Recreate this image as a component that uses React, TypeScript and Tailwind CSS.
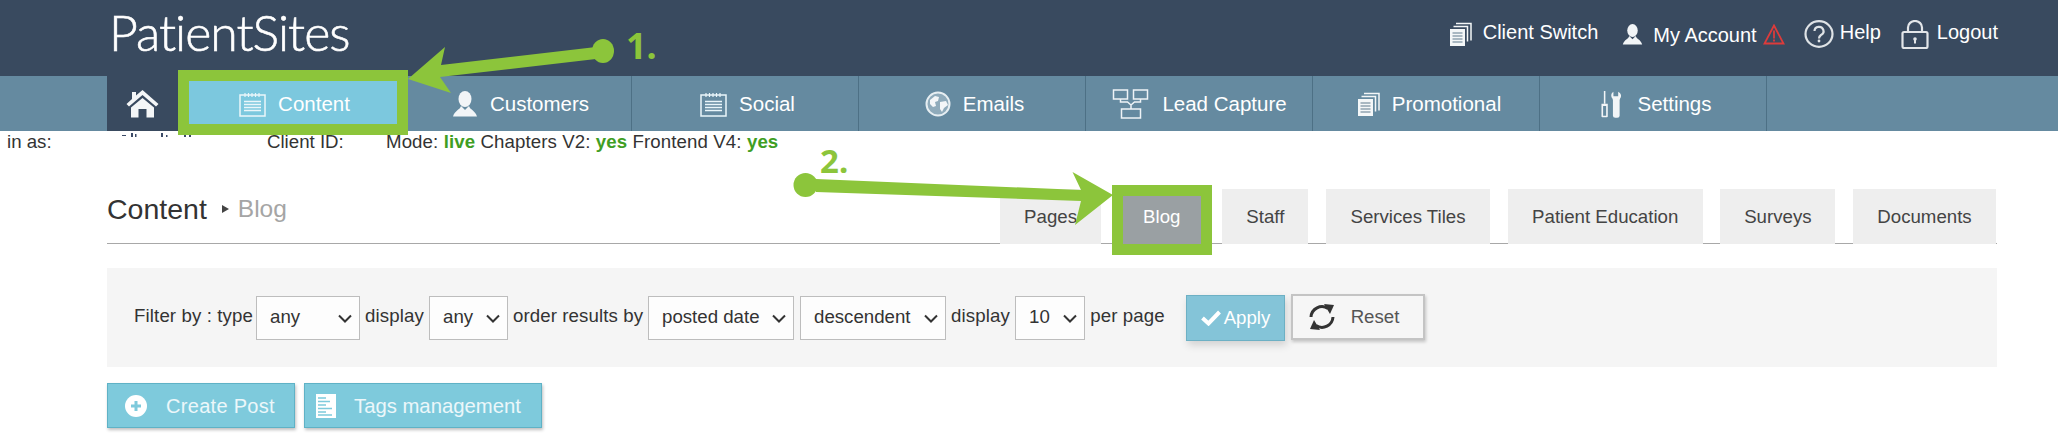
import type { ReactNode } from "react"

const GREEN = "#8cc53b"

function NotepadIcon() {
  return (
    <svg width="27" height="25" viewBox="0 0 27 25" fill="none" stroke="#eaf6fa">
      <rect x="1" y="3" width="25" height="21" strokeWidth="1.5" />
      <path d="M6 1v4M9.5 1v4M13 1v4M16.5 1v4M20 1v4" strokeWidth="1.2" />
      <path d="M5 9.5h17M5 12.5h17M5 15.5h17M5 18.5h17" strokeWidth="1.6" />
    </svg>
  )
}

function HomeIcon() {
  return (
    <svg width="33" height="29" viewBox="0 0 33 29" fill="#f4f6f7">
      <path d="M16.5 1 L32.5 15 L30 17.5 L16.5 6 L3 17.5 L.5 15 L6 10 V3 H10 V6.5Z" />
      <path d="M16.5 9 L28 18.5 V28.5 H20.5 V20 H12.5 V28.5 H5 V18.5Z" />
    </svg>
  )
}

function PersonIcon({ size = 26, tone = "#f2f5f7" }: { size?: number; tone?: string }) {
  return (
    <svg width={size} height={size} viewBox="0 0 26 26" fill={tone}>
      <ellipse cx="13" cy="8" rx="6.5" ry="8" />
      <path d="M9 15 C8 19 3 19 1 25.5 H25 C23 19 18 19 17 15 L13 19Z" />
    </svg>
  )
}

function GlobeIcon() {
  return (
    <svg width="26" height="26" viewBox="0 0 26 26">
      <circle cx="13" cy="13" r="11.5" fill="#8fabbb" stroke="#e6eef2" strokeWidth="2" />
      <path d="M5 9 L10 5 L14 6 L13 10 L10 11 L11 15 L8 16 L5 13Z" fill="#f3f6f8" />
      <path d="M15 11 L21 10 L23 14 L19 17 L17 21 L15 18Z" fill="#f3f6f8" />
    </svg>
  )
}

function LeadIcon() {
  return (
    <svg width="38" height="30" viewBox="0 0 37 30" fill="none" stroke="#eef3f6" strokeWidth="1.5">
      <rect x="1" y="1" width="14" height="9" />
      <rect x="21" y="1" width="14" height="9" />
      <rect x="9" y="20" width="19" height="9" />
      <path d="M8 10v3h7l3.500 3v4M28 10v3h-6l-3.500 3" />
    </svg>
  )
}

function PagesIcon() {
  return (
    <svg width="22" height="24" viewBox="0 0 22 24" fill="none">
      <path d="M6 1.500h15v17" stroke="#f4f7f8" strokeWidth="1.500" />
      <path d="M3.500 4.500 h14 v15" stroke="#f4f7f8" strokeWidth="1.500" />
      <rect x="0" y="7" width="15" height="17" fill="#f4f7f8" />
      <path d="M2.500 11h10M2.500 14h10M2.500 17h10M2.500 20h10" stroke="#5f7a8c" strokeWidth="1.200" />
    </svg>
  )
}

function ToolsIcon() {
  return (
    <svg width="21" height="27" viewBox="0 0 22 36" fill="#f2f5f7" preserveAspectRatio="none">
      <rect x="3" y="0" width="1.600" height="17" />
      <path d="M.5 17h6.600v17a1 1 0 0 1-1 1H1.500a1 1 0 0 1-1-1Z M2.200 20v13h3.200V20Z" fillRule="evenodd" />
      <path d="M13 1 V7 H18 V1 C21 3 22 7 20 10 L19.500 12 V33 a2.500 2.500 0 0 1-2.500 2.500 H15 a2.500 2.500 0 0 1-2.500-2.500 V12 L12 10 C10 7 10.500 3 13 1Z" />
    </svg>
  )
}

function LockIcon() {
  return (
    <svg width="28" height="29" viewBox="0 0 28 29" fill="none" stroke="#e3e6e9" strokeWidth="2.200">
      <rect x="1.500" y="12" width="25" height="16" rx="1.500" />
      <path d="M7 12V7.500a7 6.500 0 0 1 14 0V12" />
      <circle cx="14" cy="19" r="1.800" fill="#e3e6e9" stroke="none" />
      <rect x="13" y="19" width="2" height="4.500" fill="#e3e6e9" stroke="none" />
    </svg>
  )
}

function WarningIcon() {
  return (
    <svg width="22" height="21" viewBox="0 0 22 21" fill="none">
      <path d="M11 1.500 L20.500 19.500 H1.500Z" stroke="#dd3b3b" strokeWidth="1.800" />
      <rect x="10.100" y="6.500" width="1.800" height="8" fill="#dd3b3b" />
      <rect x="10.100" y="15.500" width="1.800" height="2" fill="#dd3b3b" />
    </svg>
  )
}

function HelpIcon() {
  return (
    <svg width="30" height="28" viewBox="0 0 30 28" fill="none">
      <ellipse cx="15" cy="14" rx="13.500" ry="12.800" stroke="#dfe3e6" strokeWidth="2.200" />
      <path d="M10.500 11 a4.500 4.300 0 1 1 6.500 4 c-1.500 1-2 1.500-2 3.500" stroke="#dfe3e6" strokeWidth="2.200" />
      <circle cx="15" cy="21" r="1.400" fill="#dfe3e6" />
    </svg>
  )
}

function ResetIcon() {
  return (
    <svg width="30" height="26" viewBox="0 0 30 26" fill="none">
      <path d="M4 13 a11 11 0 0 1 17-8.500" stroke="#333" strokeWidth="3" />
      <path d="M26 13 a11 11 0 0 1 -17 8.500" stroke="#333" strokeWidth="3" />
      <path d="M17 0 L27 1 L23 10Z" fill="#333" />
      <path d="M13 26 L3 25 L7 16Z" fill="#333" />
    </svg>
  )
}

const navItems: { label: string; icon: ReactNode; cell: string }[] = [
  { label: "Customers", icon: <PersonIcon />, cell: "gap-[12px] pl-[5px]" },
  { label: "Social", icon: <NotepadIcon />, cell: "gap-[12px] pl-[5px]" },
  { label: "Emails", icon: <GlobeIcon />, cell: "gap-[12px] pl-[5px]" },
  { label: "Lead Capture", icon: <LeadIcon />, cell: "gap-[12px] pl-[1px]" },
  { label: "Promotional", icon: <PagesIcon />, cell: "gap-[12px] pl-[7px]" },
  { label: "Settings", icon: <ToolsIcon />, cell: "gap-[15px] pl-[7px]" },
]

const tabs = [
  { label: "Pages", width: "w-[101px]" },
  { label: "Blog", width: "w-[86px]" },
  { label: "Staff", width: "w-[86px]" },
  { label: "Services Tiles", width: "w-[164px]" },
  { label: "Patient Education", width: "w-[195px]" },
  { label: "Surveys", width: "w-[115px]" },
  { label: "Documents", width: "w-[143px]" },
]

function Select({ width, value, options }: { width: string; value: string; options: string[] }) {
  return (
    <span className="relative shrink-0">
      <select
        defaultValue={value}
        className={`${width} block h-[44px] appearance-none border border-[#bdbdbd] bg-[#fdfdfd] pb-[2px] pl-[13px] text-[#333]`}
      >
        {options.map((o) => (
          <option key={o}>{o}</option>
        ))}
      </select>
      <svg
        className="pointer-events-none absolute right-[8px] top-[18px]"
        width="14"
        height="9"
        viewBox="0 0 14 9"
        fill="none"
        stroke="#333"
        strokeWidth="2"
      >
        <path d="M1 1.500 L7 7.500 L13 1.500" />
      </svg>
    </span>
  )
}

function FilterLabel({ width, children }: { width: string; children: ReactNode }) {
  return <span className={`${width} -mt-[3px] shrink-0 text-center tracking-[0.1px]`}>{children}</span>
}

export default function App() {
  return (
    <div className="relative h-[448px] w-[2058px] overflow-hidden bg-white font-['Liberation_Sans',Arial,sans-serif] text-[18.67px] text-[#333]">
      {/* top bar */}
      <header className="flex h-[76px] items-start justify-between bg-[#394a5f] pl-[109px] pr-[60px] text-[20px] text-white">
        <div className="mt-[4px] font-['Lato',sans-serif] text-[50px] leading-[56px] font-light tracking-[-1px] [-webkit-text-stroke:0.6px_white]">
          PatientSites
        </div>
        <div className="mt-[18px] flex items-center">
          <PagesIcon />
          <span className="ml-[11px] -mt-[4px]">Client Switch</span>
          <span className="ml-[24px]">
            <PersonIcon size={21} />
          </span>
          <span className="ml-[10px] mt-[2px]">My Account</span>
          <span className="ml-[6px]">
            <WarningIcon />
          </span>
          <span className="ml-[19px]">
            <HelpIcon />
          </span>
          <span className="ml-[6px] -mt-[4px]">Help</span>
          <span className="ml-[20px]">
            <LockIcon />
          </span>
          <span className="ml-[8px] -mt-[4px]">Logout</span>
        </div>
      </header>

      {/* main nav */}
      <nav className="flex h-[55px] bg-[#658aa0] pl-[107px] pt-[1px] text-[20.5px] text-white">
        <div className="-mt-[1px] flex w-[71px] items-center justify-center bg-[#394a5f]">
          <HomeIcon />
        </div>
        <div className="-mt-[1px] flex w-[227px] items-center justify-center gap-[12px] bg-[#7cc8de] pl-[6px] pt-[1px]">
          <NotepadIcon />
          Content
        </div>
        {navItems.map((item) => (
          <div
            key={item.label}
            className={`-mt-[1px] flex w-[227px] items-center justify-center border-r border-[#4d7085] pt-[1px] ${item.cell}`}
          >
            {item.icon}
            {item.label}
          </div>
        ))}
      </nav>

      {/* session info */}
      <div className="flex h-[21px] items-center pl-[7px] leading-[21px]">
        <span className="w-[115px]">in as:</span>
        <svg className="self-start" width="145" height="21" viewBox="0 0 145 21" fill="#3b4a66">
          <rect x="-2" y="4" width="6" height="1" />
          <rect x="9" y="2" width="2" height="4" />
          <rect x="13" y="3" width="1.500" height="3" />
          <rect x="39" y="2" width="2" height="4" />
          <rect x="44" y="4" width="1.500" height="2" />
          <rect x="62" y="2" width="2" height="4" />
          <rect x="67" y="3" width="2" height="3" />
        </svg>
        <span className="w-[119px]">Client ID:</span>
        <span className="tracking-[0.1px]">
          Mode: <b className="text-[#3f9e23]">live</b> Chapters V2: <b className="text-[#3f9e23]">yes</b> Frontend V4:{" "}
          <b className="text-[#3f9e23]">yes</b>
        </span>
      </div>

      <main className="pl-[107px] pr-[61px]">
        {/* title + tabs */}
        <div className="mt-[37px] flex h-[55px] items-end justify-between border-b border-[#a8a8a8]">
          <div className="mb-[17px] flex items-center">
            <span className="text-[28.5px] leading-[34px]">Content</span>
            <span className="ml-[15px] mr-[9px] h-0 w-0 border-y-[4px] border-l-[7px] border-y-transparent border-l-[#444]" />
            <span className="text-[24.5px] leading-[34px] text-[#a5a5a5]">Blog</span>
          </div>
          <div className="-mb-px mr-[1px] flex gap-[17.67px] text-[18.67px]">
            {tabs.map((t) => (
              <div
                key={t.label}
                className={`flex h-[55px] items-center justify-center pt-[1px] ${t.width} ${
                  t.label === "Blog" ? "bg-[#9aa0a3] text-white" : "bg-[#eeeeee] text-[#444]"
                }`}
              >
                {t.label}
              </div>
            ))}
          </div>
        </div>

        {/* filters */}
        <div className="mt-[24px] flex h-[99px] items-center bg-[#f5f5f5] pl-[24px]">
          <FilterLabel width="w-[125px]">Filter by : type</FilterLabel>
          <Select width="w-[104px]" value="any" options={["any", "post", "page"]} />
          <FilterLabel width="w-[69px]">display</FilterLabel>
          <Select width="w-[79px]" value="any" options={["any", "yes", "no"]} />
          <FilterLabel width="w-[140px]">order results by</FilterLabel>
          <Select width="w-[146px]" value="posted date" options={["posted date", "title"]} />
          <span className="w-[6px]" />
          <Select width="w-[146px]" value="descendent" options={["descendent", "ascendent"]} />
          <FilterLabel width="w-[69px]">display</FilterLabel>
          <Select width="w-[70px]" value="10" options={["10", "25", "50"]} />
          <FilterLabel width="w-[85px]">per page</FilterLabel>
          <button className="ml-[16px] flex h-[46px] w-[99px] items-center justify-center gap-[3px] border border-[#6db0c4] bg-[#84c4d8] text-white shadow-[2px_4px_8px_rgba(0,0,0,0.15)]">
            <svg width="20" height="16" viewBox="0 0 20 16" fill="none" stroke="#fff" strokeWidth="4">
              <path d="M1.500 8 L7.500 13.500 L18.500 2" />
            </svg>
            Apply
          </button>
          <button className="-mt-[2px] ml-[6px] flex h-[46px] w-[134px] items-center justify-center gap-[14px] border-2 border-[#c4c4c4] bg-[#f6f6f6] pr-[10px] text-[#555] shadow-[1px_2px_3px_rgba(0,0,0,0.2)]">
            <ResetIcon />
            Reset
          </button>
        </div>

        {/* actions */}
        <div className="mt-[16px] flex gap-[9px] text-[20px] text-white/85">
          <button className="flex h-[45px] w-[188px] items-center gap-[19px] border border-[#5fb2c6] bg-[#7ecadc] pl-[17px] pt-[1px] tracking-[0.3px] shadow-[1px_2px_3px_rgba(0,0,0,0.25)]">
            <svg width="22" height="22" viewBox="0 0 22 22">
              <circle cx="11" cy="11" r="11" fill="#fff" />
              <path d="M11 6v10M6 11h10" stroke="#7ecadc" strokeWidth="3" />
            </svg>
            Create Post
          </button>
          <button className="flex h-[45px] w-[238px] items-center gap-[18px] border border-[#5fb2c6] bg-[#7ecadc] pl-[11px] pt-[1px] text-[20.3px] shadow-[1px_2px_3px_rgba(0,0,0,0.25)]">
            <svg width="20" height="24" viewBox="0 0 20 24">
              <rect width="20" height="24" fill="#fff" />
              <path d="M2 4h8M2 7.500h12M2 11h8M2 14.500h14M2 18h8M2 21h14" stroke="#7ecadc" strokeWidth="1.300" />
            </svg>
            Tags management
          </button>
        </div>
      </main>

      {/* annotations */}
      <svg className="absolute inset-0" width="2058" height="448" viewBox="0 0 2058 448" fill={GREEN}>
        <path d="M183.500 75.500H402.500V129.500H183.500Z" fill="none" stroke={GREEN} strokeWidth="11" />
        <path d="M1117.500 190.500H1206.500V249.500H1117.500Z" fill="none" stroke={GREEN} strokeWidth="11" />
        <ellipse cx="603" cy="51" rx="11" ry="12" />
        <path d="M596 47 L441 65 L445 47 L408 79 L451 93 L440 77 L596 59Z" />
        <ellipse cx="805.500" cy="185" rx="12" ry="12" />
        <path d="M816 179 L1081 190 L1072.500 172 L1113 195 L1075 225 L1081 201 L816 192Z" />
      </svg>
      <span className="absolute left-[626px] top-[25px] font-['Noto_Sans',sans-serif] text-[36px] leading-[42px] font-bold text-[#8cc53b]">
        1.
      </span>
      <span className="absolute left-[820px] top-[142px] font-['Noto_Sans',sans-serif] text-[33px] leading-[38px] font-bold text-[#8cc53b]">
        2.
      </span>
    </div>
  )
}
